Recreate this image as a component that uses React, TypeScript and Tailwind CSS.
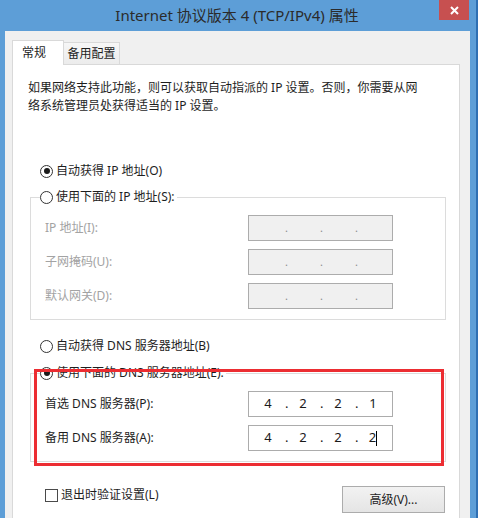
import { Fragment } from 'react'

const FONT = "font-['Noto_Sans','Noto_Sans_CJK_SC',sans-serif]"

function Radio({ checked }: { checked?: boolean }) {
  return (
    <span className="w-[13px] h-[13px] rounded-full border border-[#333] bg-white flex items-center justify-center shrink-0">
      {checked && <span className="w-[6px] h-[6px] rounded-full bg-[#1a1a1a]" />}
    </span>
  )
}

function IpField({ parts, disabled, caret }: { parts?: string[]; disabled?: boolean; caret?: boolean }) {
  const segs = parts ?? ['', '', '', '']
  return (
    <div
      className={`w-[145px] h-[26px] border border-[#acacac] flex items-center pl-[9px] ${
        disabled ? 'bg-[#f0f0f0] text-[#8c8c8c] text-[11px]' : 'bg-white text-[#1a1a1a] text-[13px]'
      }`}
    >
      {segs.map((s, i) => (
        <Fragment key={i}>
          <span className="w-[20px] flex items-center justify-center">
            {s}
            {caret && i === 3 && <span className="w-px h-[15px] bg-black" />}
          </span>
          {i < 3 && <span className="w-[15px] pl-[7px]">.</span>}
        </Fragment>
      ))}
    </div>
  )
}

function FieldRow({ label, disabled, parts, caret }: { label: string; disabled?: boolean; parts?: string[]; caret?: boolean }) {
  return (
    <div className="flex items-center h-[26px] pl-[5px]">
      <span className={`w-[203px] ${disabled ? 'text-[#a3a3a3]' : 'text-[#1e1e1e]'}`}>{label}</span>
      <IpField parts={parts} disabled={disabled} caret={caret} />
    </div>
  )
}

export default function App() {
  return (
    <div className={`w-[496px] h-[518px] bg-white overflow-hidden flex text-[12px] ${FONT}`}>
      <div className="w-[478px] h-[560px] bg-[#5d9ed7] border-r-2 border-[#2e6fb3] flex flex-col">
        {/* title bar */}
        <div className="h-[31px] flex items-start shrink-0">
          <div className="flex-1 pl-[35px] h-[30px] flex items-center justify-center text-[15px] text-[#2b2b2b]">
            Internet 协议版本 4 (TCP/IPv4) 属性
          </div>
          <div className="w-[30px] h-[20px] mr-[7px] bg-[#c75050] flex items-center justify-center">
            <svg width="9" height="9" viewBox="0 0 9 9">
              <path d="M1 1L8 8M8 1L1 8" stroke="white" strokeWidth="2" />
            </svg>
          </div>
        </div>

        {/* window body */}
        <div className="flex-1 ml-[5px] mr-[6px] bg-[#f0f0f0] pl-[7px] pr-[10px] pt-[9px] flex flex-col">
          <div className="flex items-end h-[24px]">
            <div className="relative z-10 w-[52px] h-[25px] -mb-px bg-white border-t border-l border-r border-[#d9d9d9] pl-[9px] flex items-center text-[#1e1e1e]">
              常规
            </div>
            <div className="w-[56px] h-[22px] bg-gradient-to-b from-[#f6f6f6] to-[#ececec] border-t border-r border-[#d9d9d9] flex items-center justify-center text-[#1e1e1e]">
              备用配置
            </div>
          </div>

          <div className="relative flex-1 bg-white border border-[#d9d9d9] pl-[15px] pr-[13px] pt-[14px] flex flex-col text-[#1e1e1e]">
            <p className="leading-[18px] whitespace-nowrap">
              如果网络支持此功能，则可以获取自动指派的 IP 设置。否则，你需要从网
              <br />
              络系统管理员处获得适当的 IP 设置。
            </p>

            <div className="mt-[47px] ml-[12px] h-[18px] flex items-center gap-[3px]">
              <Radio checked />
              <span>自动获得 IP 地址(O)</span>
            </div>

            <fieldset className="mt-[8px] ml-[2px] border border-[#dcdcdc] px-[9px] pt-[9px] pb-[10px] flex flex-col gap-[8px]">
              <legend className="h-[18px] flex items-center gap-[3px] pr-[2px]">
                <Radio />
                <span>使用下面的 IP 地址(S):</span>
              </legend>
              <FieldRow label="IP 地址(I):" disabled />
              <FieldRow label="子网掩码(U):" disabled />
              <FieldRow label="默认网关(D):" disabled />
            </fieldset>

            <div className="mt-[17px] ml-[12px] h-[18px] flex items-center gap-[3px]">
              <Radio />
              <span>自动获得 DNS 服务器地址(B)</span>
            </div>

            <fieldset className="mt-[9px] ml-[2px] border border-[#dcdcdc] px-[9px] pt-[9px] pb-[10px] flex flex-col gap-[8px]">
              <legend className="h-[18px] flex items-center gap-[3px] pr-[2px]">
                <Radio checked />
                <span>使用下面的 DNS 服务器地址(E):</span>
              </legend>
              <FieldRow label="首选 DNS 服务器(P):" parts={['4', '2', '2', '1']} />
              <FieldRow label="备用 DNS 服务器(A):" parts={['4', '2', '2', '2']} caret />
            </fieldset>

            <div className="mt-[24px] flex items-start justify-between pr-[1px]">
              <div className="ml-[17px] h-[18px] flex items-center gap-[3px]">
                <span className="w-[13px] h-[13px] border border-[#4a4a4a] bg-white" />
                <span>退出时验证设置(L)</span>
              </div>
              <div className="w-[103px] h-[27px] border border-[#acacac] bg-gradient-to-b from-[#f2f2f2] to-[#e5e5e5] flex items-center justify-center">
                高级(V)...
              </div>
            </div>

            {/* red annotation */}
            <div className="absolute left-[21px] top-[304px] w-[410px] h-[97px] border-[3px] border-[#ec2d32]" />
          </div>
        </div>
      </div>
    </div>
  )
}
